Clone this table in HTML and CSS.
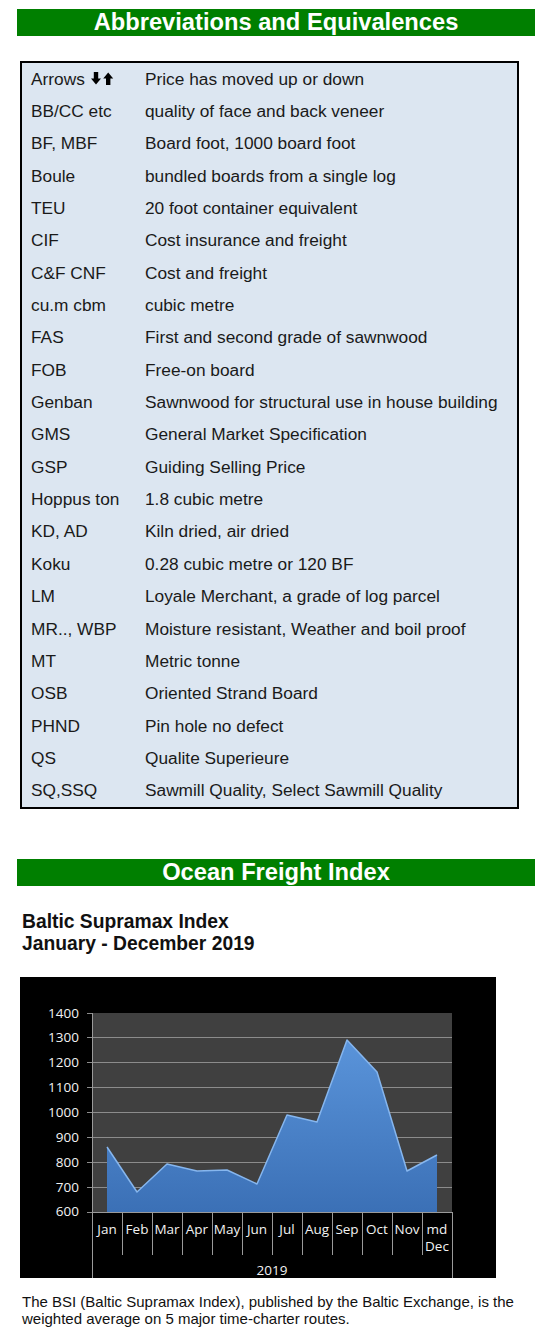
FILE: index.html
```html
<!DOCTYPE html>
<html>
<head>
<meta charset="utf-8">
<link rel="stylesheet" href="styles.css">
</head>
<body>
<h1 class="bar">Abbreviations and Equivalences</h1>
<div class="abbr">
  <div class="k">Arrows <svg class="arrows" width="23" height="13" viewBox="0 0 23 13"><path d="M2.8 0h4.4v6.5h2.8l-5 6L0 6.5h2.8z" fill="#000"/><path d="M15 13h4.4V6.5h2.8l-5-6-5 6H15z" fill="#000"/></svg></div><div class="v">Price has moved up or down</div>
  <div class="k">BB/CC etc</div><div class="v">quality of face and back veneer</div>
  <div class="k">BF, MBF</div><div class="v">Board foot, 1000 board foot</div>
  <div class="k">Boule</div><div class="v">bundled boards from a single log</div>
  <div class="k">TEU</div><div class="v">20 foot container equivalent</div>
  <div class="k">CIF</div><div class="v">Cost insurance and freight</div>
  <div class="k">C&amp;F CNF</div><div class="v">Cost and freight</div>
  <div class="k">cu.m cbm</div><div class="v">cubic metre</div>
  <div class="k">FAS</div><div class="v">First and second grade of sawnwood</div>
  <div class="k">FOB</div><div class="v">Free-on board</div>
  <div class="k">Genban</div><div class="v">Sawnwood for structural use in house building</div>
  <div class="k">GMS</div><div class="v">General Market Specification</div>
  <div class="k">GSP</div><div class="v">Guiding Selling Price</div>
  <div class="k">Hoppus ton</div><div class="v">1.8 cubic metre</div>
  <div class="k">KD, AD</div><div class="v">Kiln dried, air dried</div>
  <div class="k">Koku</div><div class="v">0.28 cubic metre or 120 BF</div>
  <div class="k">LM</div><div class="v">Loyale Merchant, a grade of log parcel</div>
  <div class="k">MR.., WBP</div><div class="v">Moisture resistant, Weather and boil proof</div>
  <div class="k">MT</div><div class="v">Metric tonne</div>
  <div class="k">OSB</div><div class="v">Oriented Strand Board</div>
  <div class="k">PHND</div><div class="v">Pin hole no defect</div>
  <div class="k">QS</div><div class="v">Qualite Superieure</div>
  <div class="k">SQ,SSQ</div><div class="v">Sawmill Quality, Select Sawmill Quality</div>
</div>

<h2 class="bar bar2">Ocean Freight Index</h2>
<h3 class="chart-title">Baltic Supramax Index<br>January - December 2019</h3>

<div class="chart">
<svg width="476" height="301" viewBox="0 0 476 301">
  <defs>
    <linearGradient id="g" x1="0" y1="0" x2="0" y2="1">
      <stop offset="0" stop-color="#5a94da"/>
      <stop offset="1" stop-color="#3b70b6"/>
    </linearGradient>
  </defs>
  <rect x="72" y="36" width="360" height="199" fill="#404040"/>
  <g stroke="#8c8c8c" stroke-width="1">
    <line x1="67" y1="60.5" x2="432" y2="60.5"/>
    <line x1="67" y1="85.5" x2="432" y2="85.5"/>
    <line x1="67" y1="110.5" x2="432" y2="110.5"/>
    <line x1="67" y1="135.5" x2="432" y2="135.5"/>
    <line x1="67" y1="160.5" x2="432" y2="160.5"/>
    <line x1="67" y1="185.5" x2="432" y2="185.5"/>
    <line x1="67" y1="210.5" x2="432" y2="210.5"/>
    <line x1="67" y1="36.5" x2="72" y2="36.5"/>
    <line x1="67" y1="235.5" x2="72" y2="235.5"/>
  </g>
  <path d="M87 235 L87 170 L117 215 L147 187 L177 194 L207 193 L237 207 L267 138 L297 145 L327 63 L357 95 L387 194 L417 178 L417 235 Z" fill="url(#g)"/>
  <path d="M87 170 L117 215 L147 187 L177 194 L207 193 L237 207 L267 138 L297 145 L327 63 L357 95 L387 194 L417 178" fill="none" stroke="#86b6ee" stroke-width="1.5" stroke-linejoin="round"/>
  <g stroke="#9a9a9a" stroke-width="1">
    <line x1="72.5" y1="36" x2="72.5" y2="301"/>
    <line x1="432.5" y1="235" x2="432.5" y2="301"/>
    <line x1="102.5" y1="235" x2="102.5" y2="278"/>
    <line x1="132.5" y1="235" x2="132.5" y2="278"/>
    <line x1="162.5" y1="235" x2="162.5" y2="278"/>
    <line x1="192.5" y1="235" x2="192.5" y2="278"/>
    <line x1="222.5" y1="235" x2="222.5" y2="278"/>
    <line x1="252.5" y1="235" x2="252.5" y2="278"/>
    <line x1="282.5" y1="235" x2="282.5" y2="278"/>
    <line x1="312.5" y1="235" x2="312.5" y2="278"/>
    <line x1="342.5" y1="235" x2="342.5" y2="278"/>
    <line x1="372.5" y1="235" x2="372.5" y2="278"/>
    <line x1="402.5" y1="235" x2="402.5" y2="278"/>
  </g>
  <line x1="72" y1="235.5" x2="432" y2="235.5" stroke="#9a9a9a"/>
  <g class="ylab" text-anchor="end">
    <text x="59" y="41">1400</text>
    <text x="59" y="65">1300</text>
    <text x="59" y="90">1200</text>
    <text x="59" y="115">1100</text>
    <text x="59" y="140">1000</text>
    <text x="59" y="165">900</text>
    <text x="59" y="190">800</text>
    <text x="59" y="215">700</text>
    <text x="59" y="239">600</text>
  </g>
  <g class="xlab" text-anchor="middle">
    <text x="87" y="257">Jan</text>
    <text x="117" y="257">Feb</text>
    <text x="147" y="257">Mar</text>
    <text x="177" y="257">Apr</text>
    <text x="207" y="257">May</text>
    <text x="237" y="257">Jun</text>
    <text x="267" y="257">Jul</text>
    <text x="297" y="257">Aug</text>
    <text x="327" y="257">Sep</text>
    <text x="357" y="257">Oct</text>
    <text x="387" y="257">Nov</text>
    <text x="417" y="257">md</text>
    <text x="417" y="274">Dec</text>
    <text x="252" y="298">2019</text>
  </g>
</svg>
</div>

<p class="note">The BSI (Baltic Supramax Index), published by the Baltic Exchange, is the weighted average on 5 major time-charter routes.</p>
</body>
</html>
```

FILE: styles.css
```css
html, body {
  margin: 0;
  padding: 0;
  background: #fff;
}
body {
  padding-top: 9px;
  font-family: "Liberation Sans", Arial, sans-serif;
  color: #1a1a1a;
}
.bar {
  margin: 0 22px 0 17px;
  height: 27px;
  background: #007f00;
  color: #fff;
  font-weight: bold;
  font-size: 23.7px;
  line-height: 27px;
  text-align: center;
}
.abbr {
  margin: 25px 0 0 20px;
  width: 499px;
  box-sizing: border-box;
  background: #dce6f1;
  border: 2px solid #000;
  padding-left: 9px;
  display: grid;
  grid-template-columns: 114px 1fr;
  grid-auto-rows: 32.35px;
  align-items: center;
  font-size: 17.3px;
}
.abbr .k, .abbr .v {
  white-space: nowrap;
}
.arrows {
  vertical-align: 0;
  margin-left: 1px;
}
.bar2 {
  margin-top: 50px;
}
.chart-title {
  margin: 25px 0 0 22px;
  font-size: 19.3px;
  line-height: 22px;
  font-weight: bold;
  color: #111;
}
.chart {
  margin: 22px 0 0 20px;
  width: 476px;
  height: 301px;
  background: #000;
}
.chart svg {
  display: block;
}
.ylab text, .xlab text {
  fill: #f2f2f2;
  font-family: "Open Sans", "DejaVu Sans", sans-serif;
  font-size: 13.5px;
}
.note {
  margin: 15px 0 0 22px;
  width: 515px;
  font-size: 15px;
  line-height: 17px;
  color: #111;
}
```
